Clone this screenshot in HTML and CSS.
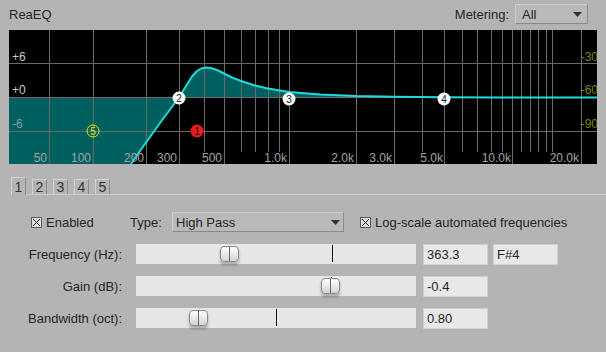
FILE: index.html
```html
<!DOCTYPE html>
<html lang="en">
<head>
    <meta charset="UTF-8">
    <title>ReaEQ</title>
    <link rel="stylesheet" href="styles.css">
</head>
<body>
    <header class="top">
        <span class="title">ReaEQ</span>
        <div class="meter">
            <span>Metering:</span>
            <div class="select select-meter">
                <span>All</span>
                <svg class="arrow" width="9" height="5" viewBox="0 0 9 5"><polygon points="0,0 9,0 4.5,5" fill="#333"/></svg>
            </div>
        </div>
    </header>

    <div class="graph">
        <svg width="588" height="134" viewBox="9 30 588 134">
            <rect x="9" y="30" width="588" height="134" fill="#000"/>
            <path fill="#006060" d="M9,97.5 L9,164 L131,164 L140,151 L150,137 L160,123 L170,109.5 L179,97.5 L186,86 L192,76.5 L197,71 L201,68.5 L206,67.5 L211,68 L217,70 L224,73.5 L232,77.5 L241,81 L255,85.5 L268,88.5 L289,92 L320,94.5 L356,96 L394,96.7 L444,97.2 L500,97.5 L597,97.5 Z"/>
            <g class="grid">
                <line x1="9" y1="63.5" x2="597" y2="63.5"/>
                <line x1="9" y1="97.5" x2="597" y2="97.5"/>
                <line x1="9" y1="131.5" x2="597" y2="131.5"/>
                <!-- labelled lines -->
                <line x1="49.5" y1="30" x2="49.5" y2="164"/>
                <line x1="93.5" y1="30" x2="93.5" y2="164"/>
                <line x1="146.5" y1="30" x2="146.5" y2="164"/>
                <line x1="179.5" y1="30" x2="179.5" y2="164"/>
                <line x1="224.5" y1="30" x2="224.5" y2="164"/>
                <line x1="289.5" y1="30" x2="289.5" y2="164"/>
                <line x1="356.5" y1="30" x2="356.5" y2="164"/>
                <line x1="394.5" y1="30" x2="394.5" y2="164"/>
                <line x1="444.5" y1="30" x2="444.5" y2="164"/>
                <line x1="512.5" y1="30" x2="512.5" y2="164"/>
                <line x1="581.5" y1="30" x2="581.5" y2="164"/>
                <!-- short lines -->
                <line x1="204.5" y1="30" x2="204.5" y2="152"/>
                <line x1="241.5" y1="30" x2="241.5" y2="152"/>
                <line x1="255.5" y1="30" x2="255.5" y2="152"/>
                <line x1="268.5" y1="30" x2="268.5" y2="152"/>
                <line x1="279.5" y1="30" x2="279.5" y2="152"/>
                <line x1="422.5" y1="30" x2="422.5" y2="152"/>
                <line x1="462.5" y1="30" x2="462.5" y2="152"/>
                <line x1="477.5" y1="30" x2="477.5" y2="152"/>
                <line x1="491.5" y1="30" x2="491.5" y2="152"/>
                <line x1="502.5" y1="30" x2="502.5" y2="152"/>
                <line x1="521.5" y1="30" x2="521.5" y2="152"/>
                <line x1="530.5" y1="30" x2="530.5" y2="152"/>
                <line x1="538.5" y1="30" x2="538.5" y2="152"/>
                <line x1="546.5" y1="30" x2="546.5" y2="152"/>
                <line x1="552.5" y1="30" x2="552.5" y2="152"/>
            </g>
            <polyline class="curve" points="131,164 140,151 150,137 160,123 170,109.5 179,97.5 186,86 192,76.5 197,71 201,68.5 206,67.5 211,68 217,70 224,73.5 232,77.5 241,81 255,85.5 268,88.5 289,92 320,94.5 356,96 394,96.7 444,97.2 500,97.5 597,97.5"/>

            <g class="axis-l">
                <text x="12" y="61">+6</text>
                <text x="12" y="94">+0</text>
                <text x="12" y="128" class="dim">-6</text>
            </g>
            <g class="axis-r">
                <text x="598" y="61">-30</text>
                <text x="598" y="94">-60</text>
                <text x="598" y="128">-90</text>
            </g>
            <g class="axis-b">
                <text x="47" y="162">50</text>
                <text x="91" y="162">100</text>
                <text x="144" y="162">200</text>
                <text x="177" y="162">300</text>
                <text x="222" y="162">500</text>
                <text x="287" y="162">1.0k</text>
                <text x="354" y="162">2.0k</text>
                <text x="392" y="162">3.0k</text>
                <text x="443" y="162">5.0k</text>
                <text x="511" y="162">10.0k</text>
                <text x="579" y="162">20.0k</text>
            </g>

            <g class="node">
                <circle cx="179" cy="98" r="6.5" fill="#fff"/>
                <text x="179" y="101.5">2</text>
            </g>
            <g class="node">
                <circle cx="289" cy="99" r="6.5" fill="#fff"/>
                <text x="289" y="102.5">3</text>
            </g>
            <g class="node">
                <circle cx="444" cy="99" r="6.5" fill="#fff"/>
                <text x="444" y="102.5">4</text>
            </g>
            <g class="node node-off">
                <circle cx="93" cy="131" r="6" fill="none" stroke="#e6e600"/>
                <text x="93" y="134.5">5</text>
            </g>
            <g class="node node-sel">
                <circle cx="197" cy="131" r="6.5" fill="#ee1a1a"/>
                <text x="197" y="134.5">1</text>
            </g>
        </svg>
    </div>

    <nav class="tabstrip">
        <div class="tab tab-on">1</div>
        <div class="tab-rest">
            <div class="tab">2</div>
            <div class="tab">3</div>
            <div class="tab">4</div>
            <div class="tab">5</div>
        </div>
    </nav>

    <main class="controls">
        <div class="row row-top">
            <label class="check enable">
                <svg class="box" width="11" height="11" viewBox="0 0 11 11"><rect x="0.5" y="0.5" width="10" height="10" fill="#dcdcdc" stroke="#5c5c5c"/><path d="M2,2 L9,9 M9,2 L2,9" stroke="#222" stroke-width="1"/></svg>
                Enabled
            </label>
            <span class="type-label">Type:</span>
            <div class="select select-type">
                <span>High Pass</span>
                <svg class="arrow" width="9" height="5" viewBox="0 0 9 5"><polygon points="0,0 9,0 4.5,5" fill="#333"/></svg>
            </div>
            <label class="check">
                <svg class="box" width="11" height="11" viewBox="0 0 11 11"><rect x="0.5" y="0.5" width="10" height="10" fill="#dcdcdc" stroke="#5c5c5c"/><path d="M2,2 L9,9 M9,2 L2,9" stroke="#222" stroke-width="1"/></svg>
                Log-scale automated frequencies
            </label>
        </div>
        <div class="row">
            <span class="label">Frequency (Hz):</span>
            <div class="track">
                <span class="tick" style="left:196px"></span>
                <span class="thumb" style="left:84px"></span>
            </div>
            <div class="field">363.3</div>
            <div class="field">F#4</div>
        </div>
        <div class="row">
            <span class="label">Gain (dB):</span>
            <div class="track">
                <span class="tick" style="left:195px"></span>
                <span class="thumb" style="left:185px"></span>
            </div>
            <div class="field">-0.4</div>
        </div>
        <div class="row">
            <span class="label">Bandwidth (oct):</span>
            <div class="track">
                <span class="tick" style="left:140px"></span>
                <span class="thumb" style="left:53px"></span>
            </div>
            <div class="field">0.80</div>
        </div>
    </main>
</body>
</html>
```
FILE: styles.css
```css
*{
    margin: 0;
    padding: 0;
}
body{
    width: 606px;
    height: 352px;
    overflow: hidden;
    background-color: #b4b4b4;
    color: #262626;
    font-family: "Liberation Sans", Arial, sans-serif;
    font-size: 13px;
}
.top{
    height: 28px;
    display: flex;
    align-items: center;
    justify-content: space-between;
    padding: 0 18px 0 9px;
}
.meter{
    display: flex;
    align-items: center;
    gap: 6px;
}
.select{
    height: 20px;
    box-sizing: border-box;
    display: flex;
    align-items: center;
    justify-content: space-between;
    border: 1px solid;
    border-color: #cecece #8a8a8a #8a8a8a #cecece;
    background-color: #b9b9b9;
}
.select-meter{
    width: 73px;
    padding: 0 5px 0 6px;
}
.select-type{
    width: 172px;
    padding: 0 3px 0 3px;
    margin-right: 16px;
}
.arrow{
    display: block;
}

.graph{
    margin: 2px 0 0 9px;
    width: 588px;
    height: 134px;
}
.graph svg{
    display: block;
}
.grid line{
    stroke: #6a6a6a;
    stroke-width: 1;
    shape-rendering: crispEdges;
}
.curve{
    fill: none;
    stroke: #1fdcdc;
    stroke-width: 2;
    stroke-linejoin: round;
}
.graph text{
    font-family: "Liberation Sans", Arial, sans-serif;
    font-size: 12px;
}
.axis-l text{
    fill: #c8c8c8;
}
.axis-l .dim{
    fill: #8aa0a0;
}
.axis-r text{
    fill: #838000;
    text-anchor: end;
}
.axis-b text{
    fill: #a4a4a4;
    text-anchor: end;
}
.node text{
    font-size: 10px;
    fill: #111;
    text-anchor: middle;
}
.node-off text{
    fill: #e6e600;
}

.tabstrip{
    display: flex;
    align-items: flex-end;
    margin-top: 13px;
    padding-left: 11px;
}
.tab{
    width: 15px;
    box-sizing: border-box;
    border: 1px solid;
    border-color: #d2d2d2 #8c8c8c #8c8c8c #d2d2d2;
    border-bottom: none;
    text-align: center;
    font-size: 14px;
    line-height: 14px;
    color: #333;
}
.tab-on{
    height: 18px;
    padding-top: 2px;
}
.tab-rest{
    flex: 1;
    display: flex;
    gap: 6px;
    padding-left: 6px;
    border-bottom: 1px solid #cbcbcb;
}
.tab-rest .tab{
    height: 15px;
}

.controls{
    display: flex;
    flex-direction: column;
    gap: 12px;
    padding-top: 17px;
}
.row{
    display: flex;
    align-items: center;
    height: 20px;
}
.row-top{
    padding-left: 31px;
}
.check{
    display: flex;
    align-items: center;
    gap: 4px;
}
.box{
    display: block;
}
.enable{
    width: 99px;
}
.type-label{
    width: 42px;
}
.label{
    width: 122px;
    margin-right: 14px;
    text-align: right;
}
.track{
    position: relative;
    width: 280px;
    height: 20px;
    margin-right: 7px;
    background-color: #e6e6e6;
}
.tick{
    position: absolute;
    top: 1px;
    width: 1px;
    height: 17px;
    background-color: #111;
}
.thumb{
    position: absolute;
    top: 2px;
    width: 19px;
    height: 16px;
    box-sizing: border-box;
    border: 1px solid #8a8a8a;
    border-radius: 4px;
    background: linear-gradient(#ffffff, #d2d2d2);
    box-shadow: 0 3px 3px rgba(0, 0, 0, 0.25);
}
.thumb::after{
    content: "";
    position: absolute;
    left: 8px;
    top: 0;
    bottom: 0;
    width: 1px;
    background-color: #666;
}
.field{
    width: 65px;
    height: 21px;
    box-sizing: border-box;
    margin-right: 5px;
    padding: 0 3px;
    border: 1px solid #cfcfcf;
    background-color: #e8e8e8;
    line-height: 19px;
}
```
